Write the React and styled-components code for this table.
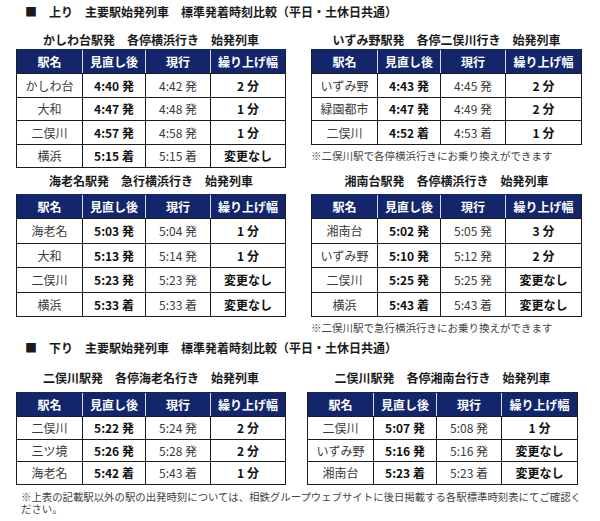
import React from "react";
import styled, { createGlobalStyle } from "styled-components";

const GlobalStyle = createGlobalStyle`
  body {
    margin: 0;
    background: #ffffff;
    font-family: "Noto Sans CJK JP", "Noto Sans", sans-serif;
    color: #222;
  }
`;

const up = [
  {
    caption: "かしわ台駅発　各停横浜行き　始発列車",
    capGap: 1,
    rowH: 24,
    rows: [
      ["かしわ台", "4:40 発", "4:42 発", "2 分"],
      ["大和", "4:47 発", "4:48 発", "1 分"],
      ["二俣川", "4:57 発", "4:58 発", "1 分"],
      ["横浜", "5:15 着", "5:15 着", "変更なし"],
    ],
  },
  {
    caption: "いずみ野駅発　各停二俣川行き　始発列車",
    capGap: 1,
    rowH: 24,
    note: "※二俣川駅で各停横浜行きにお乗り換えができます",
    rows: [
      ["いずみ野", "4:43 発", "4:45 発", "2 分"],
      ["緑園都市", "4:47 発", "4:49 発", "2 分"],
      ["二俣川", "4:52 着", "4:53 着", "1 分"],
    ],
  },
  {
    caption: "海老名駅発　急行横浜行き　始発列車",
    capGap: 5,
    rowH: 25,
    rows: [
      ["海老名", "5:03 発", "5:04 発", "1 分"],
      ["大和", "5:13 発", "5:14 発", "1 分"],
      ["二俣川", "5:23 発", "5:23 発", "変更なし"],
      ["横浜", "5:33 着", "5:33 着", "変更なし"],
    ],
  },
  {
    caption: "湘南台駅発　各停横浜行き　始発列車",
    capGap: 5,
    rowH: 25,
    note: "※二俣川駅で急行横浜行きにお乗り換えができます",
    rows: [
      ["湘南台", "5:02 発", "5:05 発", "3 分"],
      ["いずみ野", "5:10 発", "5:12 発", "2 分"],
      ["二俣川", "5:25 発", "5:25 発", "変更なし"],
      ["横浜", "5:43 着", "5:43 着", "変更なし"],
    ],
  },
];

const down = [
  {
    caption: "二俣川駅発　各停海老名行き　始発列車",
    capGap: 6,
    rowH: 23,
    rows: [
      ["二俣川", "5:22 発", "5:24 発", "2 分"],
      ["三ツ境", "5:26 発", "5:28 発", "2 分"],
      ["海老名", "5:42 着", "5:43 着", "1 分"],
    ],
  },
  {
    caption: "二俣川駅発　各停湘南台行き　始発列車",
    capGap: 6,
    rowH: 23,
    rows: [
      ["二俣川", "5:07 発", "5:08 発", "1 分"],
      ["いずみ野", "5:16 発", "5:16 発", "変更なし"],
      ["湘南台", "5:23 着", "5:23 着", "変更なし"],
    ],
  },
];

const heads = ["駅名", "見直し後", "現行", "繰り上げ幅"];

function TimeTable({ caption, capGap, rowH, rows, note }) {
  return (
    <Block>
      <Caption $gap={capGap}>{caption}</Caption>
      <Table>
        <colgroup>
          <col style={{ width: 65 }} />
          <col style={{ width: 63 }} />
          <col style={{ width: 65 }} />
          <col />
        </colgroup>
        <thead>
          <tr>
            {heads.map((h) => (
              <Th key={h}>{h}</Th>
            ))}
          </tr>
        </thead>
        <tbody>
          {rows.map((r) => (
            <tr key={r[0]}>
              {r.map((c, i) => (
                <Td key={i} $h={rowH} $bold={i === 1 || i === 3}>
                  {c}
                </Td>
              ))}
            </tr>
          ))}
        </tbody>
      </Table>
      {note && <Note>{note}</Note>}
    </Block>
  );
}

export default function App() {
  return (
    <Page>
      <GlobalStyle />
      <SectionTitle $top={4}>■　上り　主要駅始発列車　標準発着時刻比較（平日・土休日共通）</SectionTitle>
      <Grid $top={12} $gap={25} $rowGap={5}>
        {up.map((t) => (
          <TimeTable key={t.caption} {...t} />
        ))}
      </Grid>
      <SectionTitle $top={5}>■　下り　主要駅始発列車　標準発着時刻比較（平日・土休日共通）</SectionTitle>
      <Grid $top={14} $gap={21} $rowGap={0}>
        {down.map((t) => (
          <TimeTable key={t.caption} {...t} />
        ))}
      </Grid>
      <Footnote>
        ※上表の記載駅以外の駅の出発時刻については、相鉄グループウェブサイトに後日掲載する各駅標準時刻表にてご確認ください。
      </Footnote>
    </Page>
  );
}

const Page = styled.div`
  width: 600px;
  height: 521px;
  overflow: hidden;
  background: #fff;
`;

const SectionTitle = styled.div`
  margin-top: ${(p) => p.$top}px;
  padding-left: 25px;
  height: 16px;
  line-height: 16px;
  font-size: 12px;
  font-weight: 700;
  color: #1a1a1a;
  white-space: nowrap;
`;

const Grid = styled.div`
  margin-top: ${(p) => p.$top}px;
  padding-left: 16px;
  display: grid;
  grid-template-columns: 270px 271px;
  column-gap: ${(p) => p.$gap}px;
  row-gap: ${(p) => p.$rowGap}px;
  align-items: start;
`;

const Block = styled.div`
  display: flex;
  flex-direction: column;
`;

const Caption = styled.div`
  height: 16px;
  line-height: 16px;
  margin-bottom: ${(p) => p.$gap}px;
  text-align: center;
  font-size: 12px;
  font-weight: 700;
  color: #1a1a1a;
  white-space: nowrap;
`;

const Table = styled.table`
  width: 100%;
  table-layout: fixed;
  border-collapse: separate;
  border-spacing: 0;
  border: 1.5px solid #1c1c1c;
  border-top-color: #14266b;
`;

const Th = styled.th`
  height: 23px;
  padding: 0;
  background: #14266b;
  color: #fff;
  font-size: 12px;
  font-weight: 700;
  text-align: center;
  border-left: 1.5px solid #d6dcea;
  &:first-child {
    border-left: none;
  }
`;

const Td = styled.td`
  height: ${(p) => p.$h - 1.5}px;
  padding: 0;
  text-align: center;
  font-size: 12px;
  font-weight: ${(p) => (p.$bold ? 700 : 400)};
  color: ${(p) => (p.$bold ? "#111" : "#3a3a3a")};
  border-top: 1.5px solid #1c1c1c;
  border-left: 1.5px solid #1c1c1c;
  white-space: nowrap;
  &:first-child {
    border-left: none;
  }
`;

const Note = styled.div`
  margin-top: 4px;
  height: 14px;
  line-height: 14px;
  font-size: 10.5px;
  color: #444;
  white-space: nowrap;
`;

const Footnote = styled.div`
  margin-top: 6px;
  padding-left: 21px;
  width: 566px;
  font-size: 10.4px;
  line-height: 12px;
  color: #444;
`;
